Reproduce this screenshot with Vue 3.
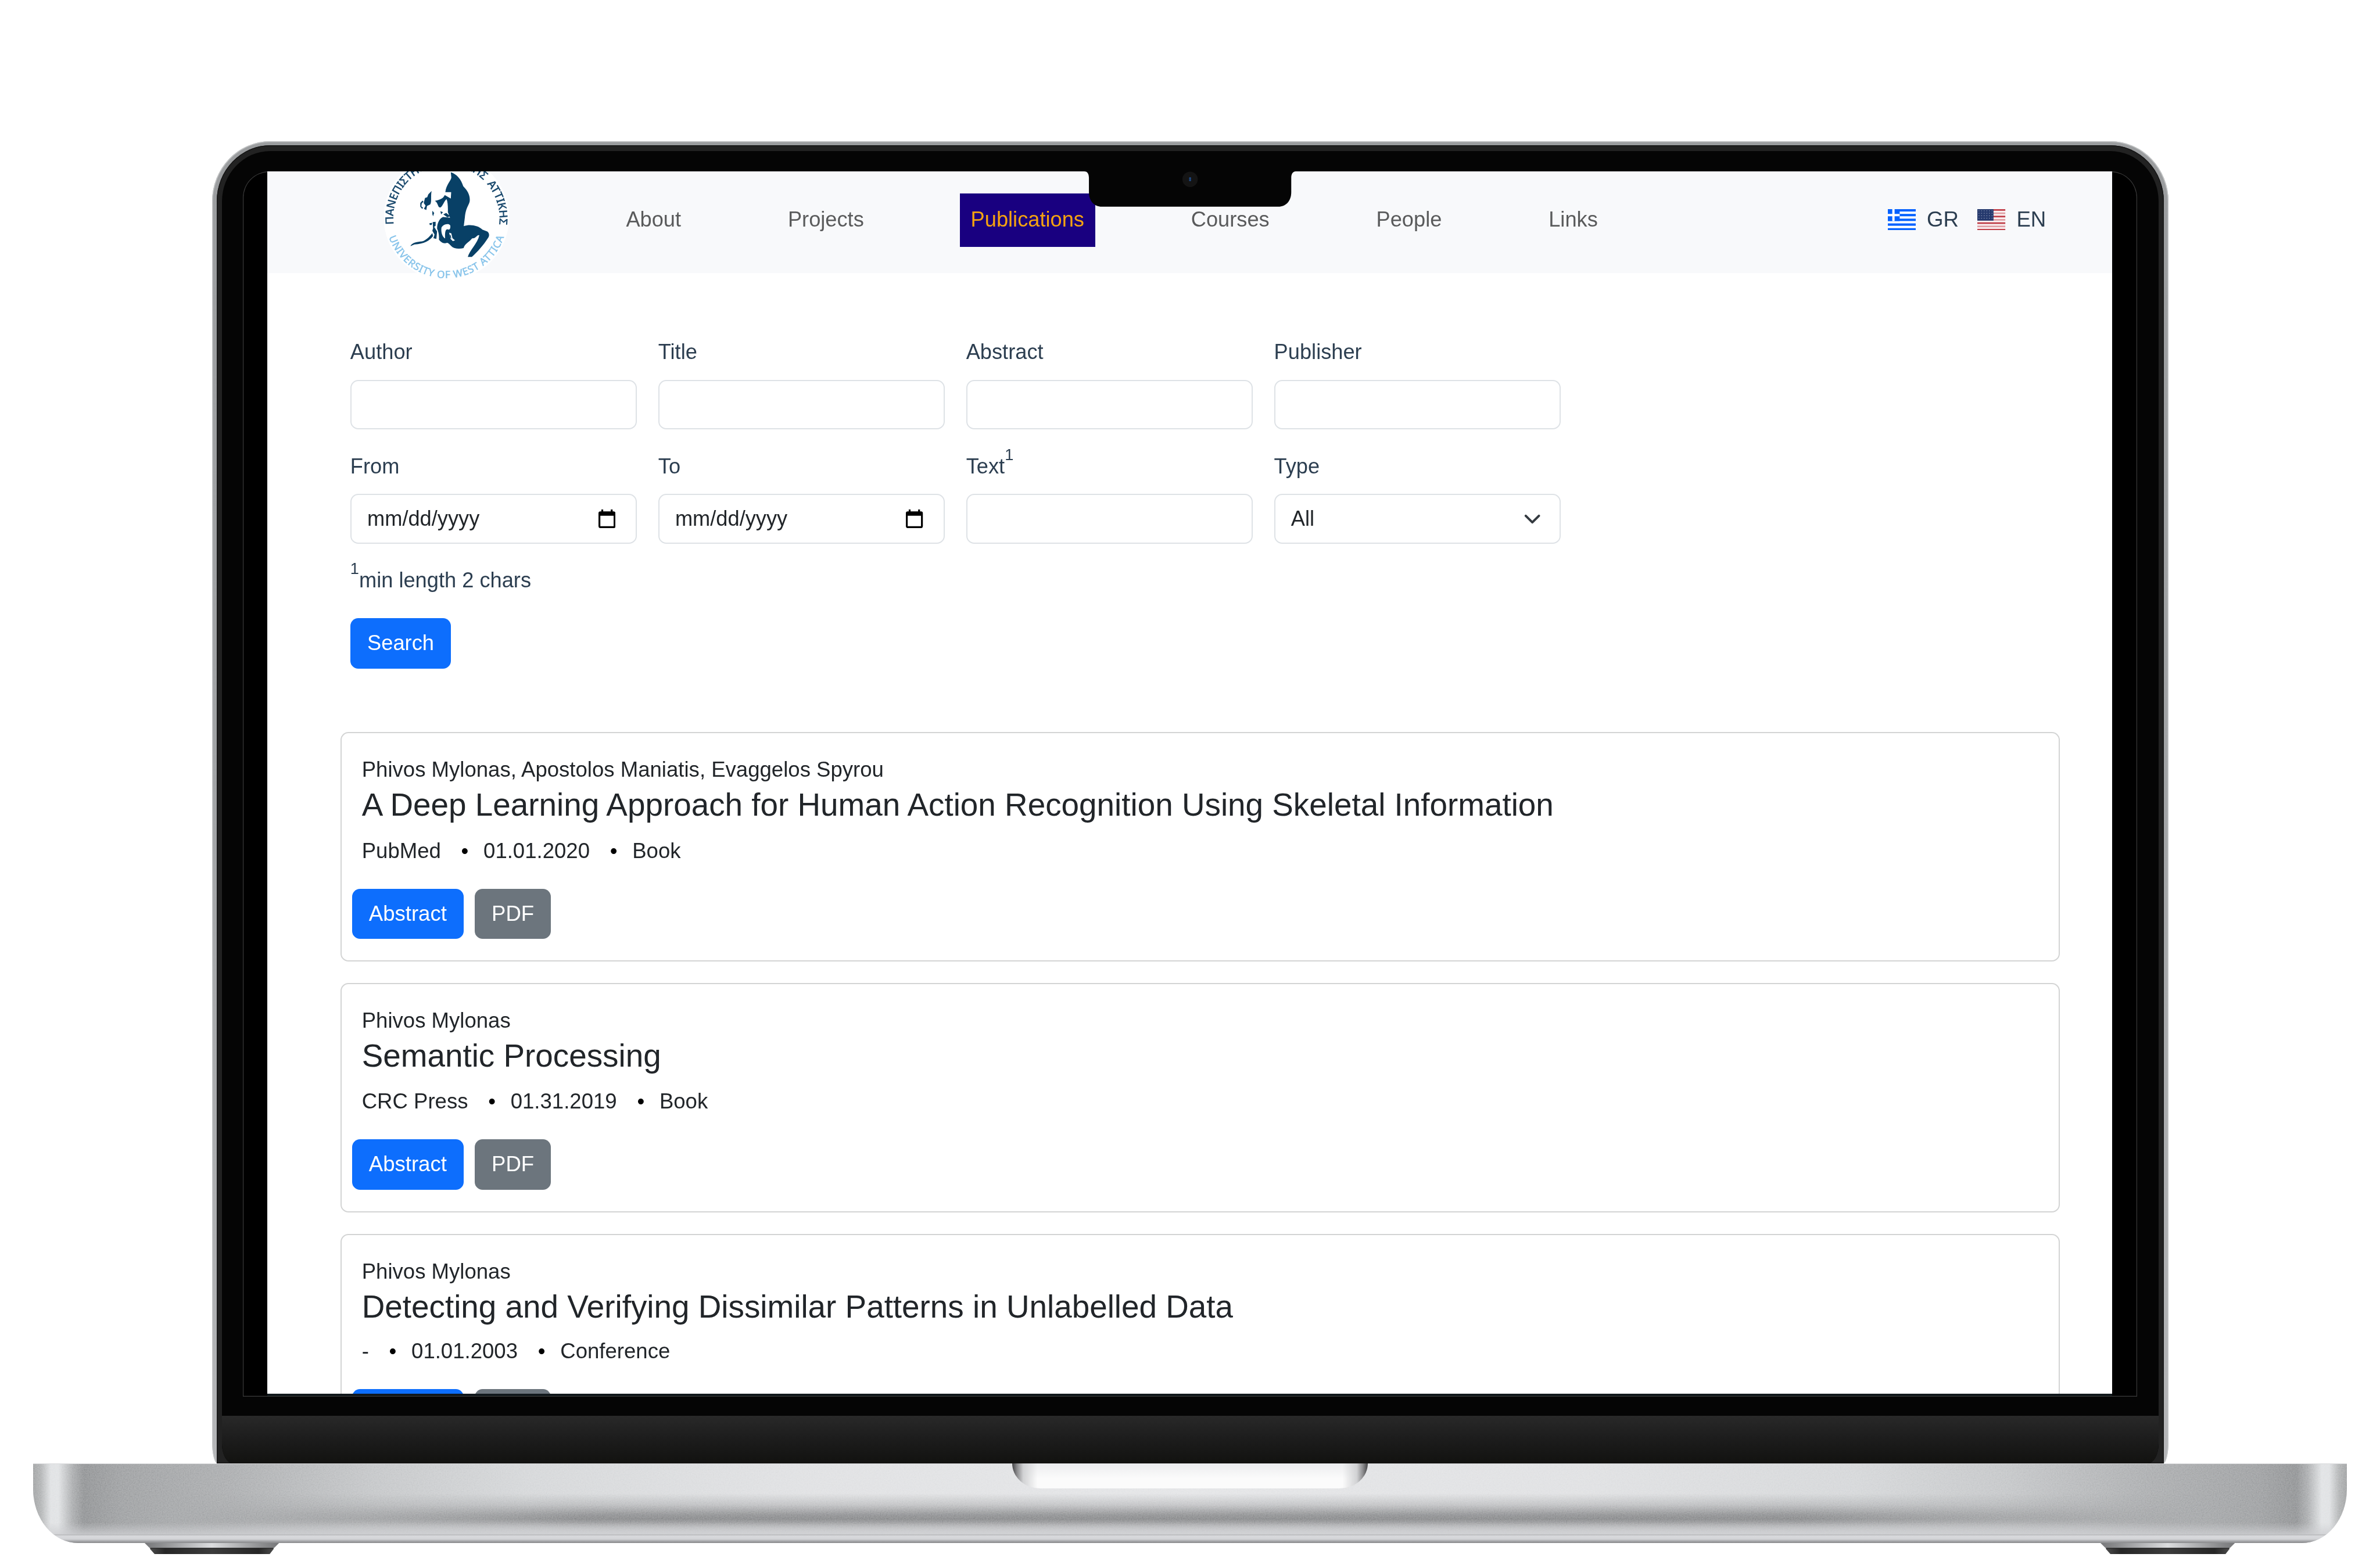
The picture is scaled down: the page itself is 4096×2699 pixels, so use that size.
<script setup>
const links = ['About', 'Projects', 'Publications', 'Courses', 'People', 'Links']
const active = 'Publications'

const fields = [
  { label: 'Author' },
  { label: 'Title' },
  { label: 'Abstract' },
  { label: 'Publisher' },
  { label: 'From', date: true },
  { label: 'To', date: true },
  { label: 'Text', note: '1' },
  { label: 'Type', select: 'All' }
]

const publications = [
  {
    authors: 'Phivos Mylonas, Apostolos Maniatis, Evaggelos Spyrou',
    title: 'A Deep Learning Approach for Human Action Recognition Using Skeletal Information',
    publisher: 'PubMed',
    date: '01.01.2020',
    type: 'Book'
  },
  {
    authors: 'Phivos Mylonas',
    title: 'Semantic Processing',
    publisher: 'CRC Press',
    date: '01.31.2019',
    type: 'Book'
  },
  {
    authors: 'Phivos Mylonas',
    title: 'Detecting and Verifying Dissimilar Patterns in Unlabelled Data',
    publisher: '-',
    date: '01.01.2003',
    type: 'Conference'
  }
]

const usStripes = [0, 2, 4, 6, 8, 10, 12]
</script>

<template>
  <div class="scene">
    <div class="lid">
      <div class="rim">
        <div class="glass">
          <div class="panel">
            <div class="screen">
              <header class="nav">
                <svg class="logo" viewBox="180 -60 690 700">
                  <defs>
                    <path id="arc-top" d="M233 329 A290 290 0 1 1 809 329" />
                    <path id="arc-bottom" d="M205 395 A333 333 0 0 0 837 395" />
                  </defs>
                  <circle cx="521" cy="291" r="343" fill="#fff" />
                  <text class="logo-gr">
                    <textPath href="#arc-top" textLength="980">ΠΑΝΕΠΙΣΤΗΜΙΟ ΔΥΤΙΚΗΣ&#160; ΑΤΤΙΚΗΣ</textPath>
                  </text>
                  <text class="logo-en">
                    <textPath href="#arc-bottom" textLength="825" startOffset="4">UNIVERSITY OF WEST ATTICA</textPath>
                  </text>
                  <g fill="#084066">
                    <path d="M545 43 C575 52 602 80 613 120 C638 146 653 172 648 205 C642 228 628 236 622 290 L616 338 C650 326 695 334 718 357 L745 368 C757 378 757 392 748 404 C725 440 690 480 660 507 L638 507 C648 470 692 432 701 388 C688 384 682 408 662 405 C640 430 622 435 615 458 C590 465 562 462 548 448 C538 438 532 430 524 430 C508 436 495 430 480 412 C482 390 478 370 470 352 C470 318 485 295 503 288 L541 292 L529 262 C530 230 528 205 522 190 C508 200 500 232 488 236 C472 238 478 212 458 200 C480 194 502 190 512 168 L545 187 L547 152 L515 152 C520 110 546 90 548 72 Z" />
                    <path d="M440 146 C434 176 442 208 432 220 L415 228 L411 250 L398 244 L407 226 L397 212 L404 184 L416 180 L422 164 Z" />
                    <path d="M378 212 L390 198 L396 204 L386 214 L384 230 L394 238 L388 244 L378 232 Z" />
                    <path d="M324 448 C332 428 362 425 388 422 C416 412 430 392 444 376 L448 392 C430 418 398 436 346 438 Z" />
                    <path d="M444 254 L454 266 L448 284 L444 272 Z" />
                    <path d="M488 256 L502 262 L492 274 Z" />
                    <path d="M504 274 L520 266 L542 284 L526 290 Z" />
                    <path d="M446 316 L462 314 L462 336 L454 342 L470 368 L466 408 L450 404 L456 384 L444 364 L448 350 Z" />
                    <path d="M428 322 L444 320 L440 332 L430 332 Z" />
                  </g>
                  <path d="M494 346 C500 330 532 320 542 334 C545 350 538 362 528 356 C516 352 512 372 514 406 C500 398 490 372 494 346 Z" fill="#fff" />
                  <path d="M536 374 L548 378 L554 404 L568 416 L556 420 L544 408 Z" fill="#fff" />
                  <path d="M540 386 L545 388 L548 408 L541 398 Z" fill="#084066" />
                </svg>
                <nav class="links">
                  <a v-for="l in links" :key="l" :class="{ active: l === active }">{{ l }}</a>
                </nav>
                <div class="langs">
                  <span class="lang">
                    <svg class="flag" viewBox="0 0 51 39" preserveAspectRatio="none">
                      <rect width="51" height="39" fill="#fff" />
                      <g fill="#0562ff">
                        <rect v-for="i in 5" :key="i" x="0" :y="(i - 1) * 8.667" width="51" height="4.333" />
                        <rect width="21.6" height="21.7" />
                      </g>
                      <path d="M10.2 0V21.7M0 10.8H21.6" stroke="#fff" stroke-width="4.2" />
                    </svg>
                    GR
                  </span>
                  <span class="lang">
                    <svg class="flag" viewBox="0 0 51 39" preserveAspectRatio="none">
                      <rect width="51" height="39" fill="#fbf4f5" />
                      <rect
                        v-for="i in usStripes"
                        :key="i"
                        x="0"
                        :y="i * 3"
                        width="51"
                        height="3"
                        :fill="i % 4 === 2 ? '#e0a0a5' : '#c0404a'"
                      />
                      <rect width="29.5" height="21" fill="#25396d" />
                      <path
                        d="M2 3H28M2 7.5H28M2 12H28M2 16.5H28"
                        stroke="#7e8bab"
                        stroke-width="1.2"
                        stroke-dasharray="1.8 3"
                      />
                    </svg>
                    EN
                  </span>
                </div>
              </header>

              <main class="content">
                <form class="search">
                  <div class="fields">
                    <div v-for="f in fields" :key="f.label" class="field">
                      <label>{{ f.label }}<sup v-if="f.note">{{ f.note }}</sup></label>
                      <div class="control">
                        <template v-if="f.date">
                          <span>mm/dd/yyyy</span>
                          <svg class="calendar" viewBox="0 0 31 34">
                            <path
                              fill-rule="evenodd"
                              d="M5.2 0H8.6V3.4H22.4V0H25.8V3.4H27.6A3.4 3.4 0 0 1 31 6.8V30.6A3.4 3.4 0 0 1 27.6 34H3.4A3.4 3.4 0 0 1 0 30.6V6.8A3.4 3.4 0 0 1 3.4 3.4H5.2ZM3.4 11.4V30.6H27.6V11.4Z"
                            />
                          </svg>
                        </template>
                        <template v-if="f.select">
                          <span>{{ f.select }}</span>
                          <svg class="chevron" viewBox="0 0 30 18">
                            <path d="M3 3L15 15L27 3" />
                          </svg>
                        </template>
                      </div>
                    </div>
                  </div>
                  <p class="hint"><sup>1</sup>min length 2 chars</p>
                  <button type="button" class="btn primary">Search</button>
                </form>

                <article v-for="p in publications" :key="p.title" class="card" :class="{ tight: p.publisher === '-' }">
                  <div class="authors">{{ p.authors }}</div>
                  <h4>{{ p.title }}</h4>
                  <div class="meta">
                    <span>{{ p.publisher }}</span>
                    <i>•</i>
                    <span>{{ p.date }}</span>
                    <i>•</i>
                    <span>{{ p.type }}</span>
                  </div>
                  <div class="actions">
                    <button type="button" class="btn primary">Abstract</button>
                    <button type="button" class="btn secondary">PDF</button>
                  </div>
                </article>
              </main>
            </div>
            <svg class="notch" viewBox="0 0 386 66">
              <path d="M0 0C6 0 8.500 5 8.500 12V38C8.500 54 18 64.500 32 64.500H354C368 64.500 377.500 54 377.500 38V12C377.500 5 380 0 386 0Z" fill="#050505" />
              <circle cx="193" cy="14.500" r="14" fill="#141414" />
              <circle cx="193" cy="12.500" r="2" fill="#1f4a86" />
              <circle cx="193" cy="16" r="2" fill="#1f4a86" />
            </svg>
          </div>
          <div class="chin"></div>
        </div>
      </div>
    </div>
    <div class="base">
      <svg class="grain">
        <filter id="grain" x="0" y="0" width="100%" height="100%">
          <feTurbulence type="fractalNoise" baseFrequency="0.45" numOctaves="2" seed="4" />
          <feColorMatrix values="1 0 0 0 0  1 0 0 0 0  1 0 0 0 0  0 0 0 0 1" />
        </filter>
        <rect width="100%" height="100%" filter="url(#grain)" />
      </svg>
      <div class="scoop"></div>
    </div>
    <div class="feet">
      <svg v-for="n in 2" :key="n" class="foot" viewBox="0 0 245 20" preserveAspectRatio="none">
        <defs>
          <linearGradient :id="'steel' + n">
            <stop offset="0" stop-color="#77787a" />
            <stop offset=".12" stop-color="#8b8c8e" />
            <stop offset=".5" stop-color="#dcdddf" />
            <stop offset=".88" stop-color="#8b8c8e" />
            <stop offset="1" stop-color="#77787a" />
          </linearGradient>
          <linearGradient :id="'rubber' + n">
            <stop offset="0" stop-color="#4b4b4b" />
            <stop offset=".12" stop-color="#262626" />
            <stop offset=".5" stop-color="#3c3c3c" />
            <stop offset=".88" stop-color="#262626" />
            <stop offset="1" stop-color="#4b4b4b" />
          </linearGradient>
        </defs>
        <path d="M0 0H245L236 9H9Z" :fill="`url(#steel${n})`" />
        <path d="M10 9H235V11L228 20H18L10 11Z" :fill="`url(#rubber${n})`" />
        <path d="M10 9.500H235" stroke="#111" />
      </svg>
    </div>
  </div>
</template>

<style>
body {
  margin: 0;
  background: #fff;
  overflow: hidden;
}
</style>

<style scoped>
.scene {
  zoom: 0.94378;
  box-sizing: border-box;
  width: 4340px;
  height: 2859px;
  padding-top: 257px;
  background: #fff;
  overflow: hidden;
  font-family: "Liberation Sans", Arial, sans-serif;
  font-size: 38.4px;
  line-height: 58px;
  color: #212529;
}
.scene * {
  box-sizing: border-box;
}

/* laptop lid */
.lid {
  width: 3567px;
  height: 2412px;
  margin-left: 387px;
  padding: 8px 8px 0;
  border-radius: 106px 106px 10px 10px / 110px 110px 40px 40px;
  background: linear-gradient(#9b9d9f, #a2a4a6 50%, #b5b6b8);
  box-shadow: inset 0 0 0 1.5px #c4c6c7;
}
.rim {
  height: 100%;
  padding: 10px 10px 0;
  border-radius: 98px 98px 0 0 / 102px 102px 0 0;
  background: #222;
  box-shadow: inset 0 0 0 1.5px #161616;
}
.glass {
  display: flex;
  flex-direction: column;
  height: 100%;
  padding-top: 38px;
  border-radius: 88px 88px 20px 20px / 92px 92px 36px 36px;
  background: #050505;
  overflow: hidden;
}
.panel {
  position: relative;
  flex: none;
  width: 3455px;
  height: 2234px;
  margin: 0 0 35px 37.500px;
  padding-left: 44.600px;
  border-radius: 48px 48px 0 0;
  background: #000;
  box-shadow: inset 0 0 0 1.2px #3b3b3b;
}
.screen {
  width: 3364px;
  height: 2233px;
  border-bottom: 5px solid #11181c;
  background: #fff;
  overflow: hidden;
}
.notch {
  position: absolute;
  left: 1534.500px;
  top: 0;
  width: 386px;
  height: 66px;
}
.chin {
  flex: 1;
  border-radius: 0 0 20px 20px / 0 0 36px 36px;
  background: linear-gradient(#292929, #1d1d1d 45%, #121210);
}

/* site header */
.nav {
  position: relative;
  display: flex;
  align-items: flex-start;
  height: 184.700px;
  padding: 40px 120px 0 634.700px;
  background: #f8f9fb;
}
.logo {
  position: absolute;
  left: 213px;
  top: -33px;
  width: 230px;
  height: 233.300px;
}
.logo-gr {
  font-family: "Noto Sans", sans-serif;
  font-weight: 600;
  font-size: 62px;
  fill: #1b4a6e;
}
.logo-en {
  font-family: "Noto Sans", sans-serif;
  font-size: 55px;
  fill: #86c3ea;
  stroke: #86c3ea;
  stroke-width: 1.500;
}
.links {
  display: flex;
  gap: 155.200px;
}
.links a {
  height: 97px;
  padding: 18.500px 19.800px;
  color: #5a5b5c;
}
.links a.active {
  background: #190080;
  color: #f5a310;
}
.langs {
  display: flex;
  gap: 34.500px;
  margin-left: auto;
  padding-top: 18.500px;
  font-size: 38.800px;
  color: #2c3e50;
}
.lang {
  display: flex;
  align-items: center;
  gap: 20px;
}
.flag {
  width: 51px;
  height: 39px;
}

/* search form */
.content {
  padding: 115.800px 0 0 133.700px;
}
.search {
  margin: 0 0 116px 18px;
  color: #2c3e50;
}
.fields {
  display: grid;
  grid-template-columns: repeat(4, 523px);
  gap: 38.500px 38.500px;
}
.field label {
  display: block;
  padding-top: 0.500px;
  margin-bottom: 20.500px;
}
sup {
  font-size: 28.800px;
  line-height: 0;
  vertical-align: 24.500px;
}
.control {
  display: flex;
  align-items: center;
  justify-content: space-between;
  height: 91px;
  padding: 0 37.800px 0 28.800px;
  border: 2.400px solid #dee2e6;
  border-radius: 14.400px;
  background: #fff;
  color: #212529;
}
.calendar {
  width: 31px;
  height: 34px;
  fill: #000;
}
.chevron {
  width: 30px;
  height: 18px;
  margin-right: -3px;
  fill: none;
  stroke: #343a40;
  stroke-width: 4.200;
  stroke-linecap: round;
  stroke-linejoin: round;
}
.hint {
  margin: 37.500px 0 40px;
}
.btn {
  height: 92px;
  padding: 0 31px;
  border: 0;
  border-radius: 14.400px;
  font: inherit;
  color: #fff;
}
.search .btn {
  display: block;
}
.primary {
  background: #0d6efd;
}
.secondary {
  background: #6c757d;
}

/* publication cards */
.card {
  width: 3135px;
  height: 418.500px;
  margin-bottom: 39px;
  padding: 38.300px 18.700px 0;
  border: 2.400px solid #d3d4d4;
  border-radius: 14.400px;
  font-size: 38.750px;
}
.authors,
.card h4,
.meta {
  margin-left: 18.200px;
  white-space: nowrap;
}
.card h4 {
  margin-top: 0;
  margin-bottom: 20px;
  font-size: 58.100px;
  font-weight: 400;
  line-height: 69.500px;
}
.meta {
  display: flex;
}
.meta i {
  margin: 0 27.200px 0 36.800px;
  font-style: normal;
  color: #000;
}
.actions {
  display: flex;
  gap: 19.800px;
  margin-top: 39.500px;
}
.tight h4 {
  margin-bottom: 17.500px;
}

/* laptop base */
.base {
  position: relative;
  width: 4219.500px;
  height: 145px;
  margin-left: 60.200px;
  border-radius: 0 0 82px 82px / 0 0 98px 98px;
  background: linear-gradient(90deg, #9fa1a2 0, #b0b2b3 14px, #dfe1e3 32px, #e0e2e4 46px, #a9abad 72px, #8f9193 92px, #9c9ea0 160px, #a9abad 360px, #c3c5c7 620px, #d4d6d8 900px, #dfe0e2 1400px, #e3e4e6 50%, #dfe0e2 calc(100% - 1400px), #d4d6d8 calc(100% - 900px), #c3c5c7 calc(100% - 620px), #a9abad calc(100% - 360px), #9c9ea0 calc(100% - 160px), #8f9193 calc(100% - 92px), #a9abad calc(100% - 72px), #e0e2e4 calc(100% - 46px), #dfe1e3 calc(100% - 32px), #b0b2b3 calc(100% - 14px), #9fa1a2 100%);
  overflow: hidden;
}
.base::before {
  content: "";
  position: absolute;
  inset: 0;
  background: linear-gradient(rgba(134, 135, 137, 0) 38%, rgba(134, 135, 137, 0.35) 52%, rgba(134, 135, 137, 0.92) 65%, #868789 70%, rgba(150, 151, 153, 0.8) 77%, rgba(201, 202, 204, 0.5) 89%);
  mask-image: linear-gradient(90deg, transparent 260px, rgba(0, 0, 0, 0.5) 520px, #000 1000px, #000 calc(100% - 1000px), rgba(0, 0, 0, 0.5) calc(100% - 520px), transparent calc(100% - 260px));
}
.base::after {
  content: "";
  position: absolute;
  inset: 0;
  border-top: 2px solid #d9dadc;
  background: linear-gradient(transparent 74%, rgba(206, 207, 210, 0.8) 89%, #b4b5b7 89.500%, #d9dadd 91%, #d3d4d7 95%, #a0a1a4 98%, #88898b 100%);
}
.grain {
  position: absolute;
  inset: 0;
  width: 100%;
  height: 100%;
  opacity: 0.22;
  mix-blend-mode: overlay;
}
.scoop {
  position: absolute;
  z-index: 1;
  left: 1785.800px;
  top: 0;
  width: 648px;
  height: 46px;
  border-radius: 0 0 52px 52px / 0 0 46px 46px;
  background:
    linear-gradient(90deg, #454547 0, #8c8c8e 9px, rgba(205, 206, 208, 0.9) 20px, rgba(245, 245, 246, 0) 46px, rgba(245, 245, 246, 0) calc(100% - 46px), rgba(205, 206, 208, 0.9) calc(100% - 20px), #8c8c8e calc(100% - 9px), #454547 100%),
    linear-gradient(#ecedef, #fbfbfb 60%);
}
.feet {
  display: flex;
  justify-content: space-between;
  padding: 0 264.500px 0 264px;
}
.foot {
  width: 245px;
  height: 20px;
}
</style>
